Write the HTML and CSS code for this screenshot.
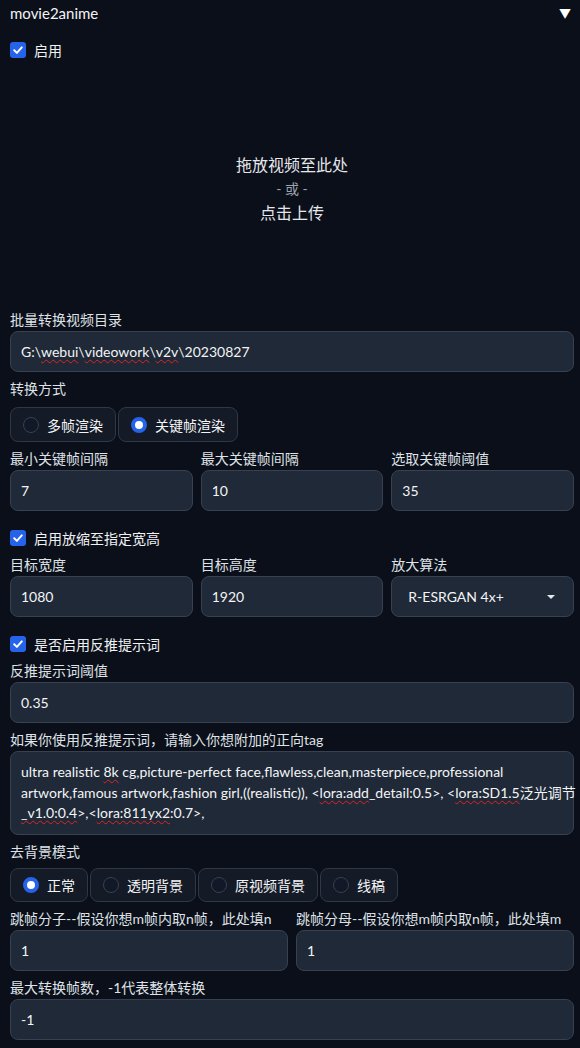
FILE: index.html
```html
<!DOCTYPE html>
<html lang="zh">
<head>
<meta charset="utf-8">
<title>movie2anime</title>
<link rel="stylesheet" href="styles.css">
</head>
<body>
<div class="panel">
  <div class="header">
    <span class="title">movie2anime</span>
    <span class="toggle">▼</span>
  </div>

  <label class="check first">
    <span class="box"><svg viewBox="0 0 16 16" width="16" height="16"><path d="M4.2 8.3 L6.9 10.9 L11.8 5.4" fill="none" stroke="#fff" stroke-width="2" stroke-linecap="round" stroke-linejoin="round"/></svg></span>
    <span>启用</span>
  </label>

  <div class="upload">
    <div class="up-main">拖放视频至此处</div>
    <div class="up-or">- 或 -</div>
    <div class="up-main">点击上传</div>
  </div>

  <div class="block">
    <div class="lbl">批量转换视频目录</div>
    <div class="field">G:\<span class="sp">webui</span>\<span class="sp">videowork</span>\<span class="sp">v2v</span>\20230827</div>
  </div>

  <div class="block">
    <div class="lbl">转换方式</div>
    <div class="radios">
      <div class="radio"><span class="dot"></span>多帧渲染</div>
      <div class="radio"><span class="dot on"></span>关键帧渲染</div>
    </div>
  </div>

  <div class="row3">
    <div class="block">
      <div class="lbl">最小关键帧间隔</div>
      <div class="field">7</div>
    </div>
    <div class="block">
      <div class="lbl">最大关键帧间隔</div>
      <div class="field">10</div>
    </div>
    <div class="block">
      <div class="lbl">选取关键帧阈值</div>
      <div class="field">35</div>
    </div>
  </div>

  <label class="check">
    <span class="box"><svg viewBox="0 0 16 16" width="16" height="16"><path d="M4.2 8.3 L6.9 10.9 L11.8 5.4" fill="none" stroke="#fff" stroke-width="2" stroke-linecap="round" stroke-linejoin="round"/></svg></span>
    <span>启用放缩至指定宽高</span>
  </label>

  <div class="row3">
    <div class="block">
      <div class="lbl">目标宽度</div>
      <div class="field">1080</div>
    </div>
    <div class="block">
      <div class="lbl">目标高度</div>
      <div class="field">1920</div>
    </div>
    <div class="block">
      <div class="lbl">放大算法</div>
      <div class="field select"><span>R-ESRGAN 4x+</span><span class="caret"></span></div>
    </div>
  </div>

  <label class="check">
    <span class="box"><svg viewBox="0 0 16 16" width="16" height="16"><path d="M4.2 8.3 L6.9 10.9 L11.8 5.4" fill="none" stroke="#fff" stroke-width="2" stroke-linecap="round" stroke-linejoin="round"/></svg></span>
    <span>是否启用反推提示词</span>
  </label>

  <div class="block">
    <div class="lbl">反推提示词阈值</div>
    <div class="field">0.35</div>
  </div>

  <div class="block">
    <div class="lbl">如果你使用反推提示词，请输入你想附加的正向tag</div>
    <div class="field area">
      <div class="ln">ultra realistic <span class="sp">8k</span> cg,picture-perfect face,flawless,clean,masterpiece,professional</div>
      <div class="ln">artwork,famous artwork,fashion girl,((realistic)), &lt;<span class="sp">lora:add</span>_detail:0.5&gt;, &lt;<span class="sp">lora:SD1.5</span>泛光调节</div>
      <div class="ln"><span class="sp">_v1.0:0.4</span>&gt;,&lt;<span class="sp">lora:811yx2</span>:0.7&gt;,</div>
    </div>
  </div>

  <div class="block">
    <div class="lbl">去背景模式</div>
    <div class="radios r2">
      <div class="radio"><span class="dot on"></span>正常</div>
      <div class="radio"><span class="dot"></span>透明背景</div>
      <div class="radio"><span class="dot"></span>原视频背景</div>
      <div class="radio"><span class="dot"></span>线稿</div>
    </div>
  </div>

  <div class="row2">
    <div class="block">
      <div class="lbl">跳帧分子--假设你想m帧内取n帧，此处填n</div>
      <div class="field">1</div>
    </div>
    <div class="block">
      <div class="lbl">跳帧分母--假设你想m帧内取n帧，此处填m</div>
      <div class="field">1</div>
    </div>
  </div>

  <div class="block">
    <div class="lbl">最大转换帧数，-1代表整体转换</div>
    <div class="field">-1</div>
  </div>
</div>
</body>
</html>
```

FILE: styles.css
```css
html, body {
  margin: 0;
  padding: 0;
  background: #0b0f19;
}
body {
  font-family: "Lato", "Noto Sans CJK SC", sans-serif;
  color: #e5e7eb;
  font-size: 14px;
}
.panel {
  width: 580px;
  box-sizing: border-box;
  padding: 0 6px 0 10px;
  display: flex;
  flex-direction: column;
  gap: 8px;
}
.header {
  display: flex;
  justify-content: space-between;
  align-items: center;
  height: 26px;
  margin-right: 1px;
}
.title {
  font-size: 15px;
  color: #f3f4f6;
}
.toggle {
  font-size: 12px;
  color: #fff;
  margin-right: 2px;
  margin-top: -2px;
}
.check {
  display: flex;
  align-items: center;
  gap: 8px;
  height: 20px;
  margin-top: 9px;
  color: #f0f1f3;
}
.check.first {
  margin-top: 6px;
}
.box {
  width: 16px;
  height: 16px;
  border-radius: 3px;
  background: #2563eb;
  display: inline-flex;
}
.upload {
  height: 235px;
  display: flex;
  flex-direction: column;
  align-items: center;
  justify-content: center;
  padding-top: 6px;
  box-sizing: border-box;
}
.up-main {
  font-size: 16px;
  line-height: 24px;
  color: #e5e7eb;
}
.up-or {
  font-size: 14px;
  line-height: 24px;
  color: #9ca3af;
}
.block {
  display: flex;
  flex-direction: column;
  min-width: 0;
}
.lbl {
  font-size: 14px;
  line-height: 18px;
  margin-bottom: 2px;
  color: #dfe2e7;
  white-space: nowrap;
}
.field {
  height: 41px;
  box-sizing: border-box;
  background: #1f2937;
  border: 1px solid #374151;
  border-radius: 8px;
  padding: 0 10px;
  display: flex;
  align-items: center;
  font-size: 14px;
  color: #f3f4f6;
}
.field.area {
  display: flex;
  flex-direction: column;
  align-items: flex-start;
  justify-content: center;
  height: 84px;
  padding: 0 10px;
}
.ln {
  line-height: 20.5px;
  white-space: nowrap;
}
.field.select {
  justify-content: space-between;
  padding: 0 18px 0 16px;
}
.caret {
  width: 0;
  height: 0;
  border-left: 4px solid transparent;
  border-right: 4px solid transparent;
  border-top: 4px solid #e5e7eb;
}
.sp {
  text-decoration: underline wavy #dc2626;
  text-decoration-thickness: 1px;
  text-underline-offset: 2px;
}
.radios {
  display: flex;
  gap: 2px;
  margin-top: 7px;
}
.radios.r2 {
  margin-top: 5px;
}
.radio {
  display: flex;
  align-items: center;
  gap: 8px;
  height: 35px;
  box-sizing: border-box;
  padding: 0 12px;
  background: #141a26;
  border: 1px solid #2f3847;
  border-radius: 8px;
  color: #f3f4f6;
  font-size: 14px;
}
.r2 .radio {
  height: 34px;
}
.dot {
  width: 16px;
  height: 16px;
  box-sizing: border-box;
  border-radius: 50%;
  border: 1px solid #374151;
  background: #111827;
}
.dot.on {
  background: #fff;
  border: 4px solid #2563eb;
}
.row3 {
  display: grid;
  grid-template-columns: 1fr 1fr 1fr;
  gap: 8px;
}
.row2 {
  display: grid;
  grid-template-columns: 1fr 1fr;
  gap: 8px;
}
```
